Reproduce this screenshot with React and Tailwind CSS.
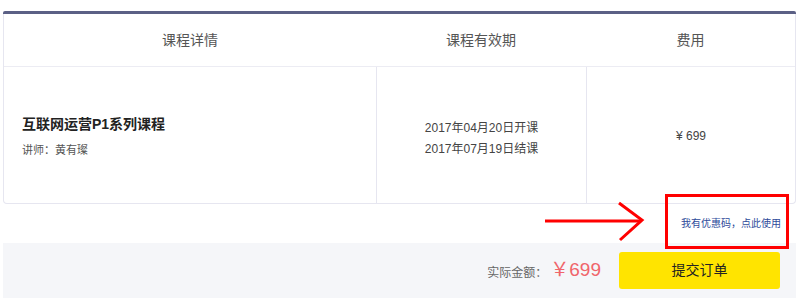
import React from 'react';

const font = { fontFamily: '"Liberation Sans", "Noto Sans CJK SC", sans-serif' };

export default function App() {
  return (
    <div className="w-[800px] h-[303px] bg-white pt-[11px]" style={font}>
      <div className="ml-[3px] mr-[4px]">
        {/* Order table */}
        <div className="border-t-[3px] border-[#5b6085] rounded-t-[2px]">
          <div className="border-x border-b border-[#e6e6f0] rounded-b-[4px]">
            <div className="grid grid-cols-[372px_210px_1fr] h-[53px] items-center border-b border-[#ececf3] text-[14px] text-[#555]">
              <div className="text-center">课程详情</div>
              <div className="text-center">课程有效期</div>
              <div className="text-center">费用</div>
            </div>
            <div className="grid grid-cols-[372px_210px_1fr] h-[136px]">
              <div className="flex flex-col justify-center pl-[18px] pt-[2px]">
                <p className="text-[14px] font-bold text-[#222] leading-[20px]">互联网运营P1系列课程</p>
                <p className="text-[11px] text-[#555] mt-[8px]">讲师：黄有璨</p>
              </div>
              <div className="flex flex-col items-center justify-center border-l border-[#e6e6f0] text-[12px] text-[#444] leading-[21px] pt-[7px]">
                <p>2017年04月20日开课</p>
                <p>2017年07月19日结课</p>
              </div>
              <div className="flex items-center justify-center border-l border-[#e6e6f0] text-[12px] text-[#444] pt-[2px]">
                ¥ 699
              </div>
            </div>
          </div>
        </div>

        {/* Coupon row */}
        <div className="relative h-[39px] flex items-center justify-end pr-[15px]">
          <span className="text-[10px] text-[#2d4a9a]">我有优惠码，点此使用</span>
          <div className="absolute left-[662px] top-[-10px] w-[124px] h-[55px] border-[3px] border-[#ff0000]" />
          <svg className="absolute left-[540px] top-[-3px]" width="104" height="42" viewBox="0 0 104 42">
            <path d="M2 20 H98" stroke="#ff0000" strokeWidth="3" fill="none" />
            <path d="M76 2 L99 19 L77 39" stroke="#ff0000" strokeWidth="3" fill="none" />
          </svg>
        </div>

        {/* Footer */}
        <div className="h-[55px] bg-[#f5f6f9] flex items-center justify-end pr-[16px]">
          <span className="text-[12px] text-[#666] mt-[4px] mr-[3px]">实际金额：</span>
          <span className="text-[19px] text-[#f0656b]">￥699</span>
          <button className="ml-[18px] w-[161px] h-[37px] rounded-[3px] bg-[#ffe400] text-[14px] text-[#222]">
            提交订单
          </button>
        </div>
      </div>
    </div>
  );
}
